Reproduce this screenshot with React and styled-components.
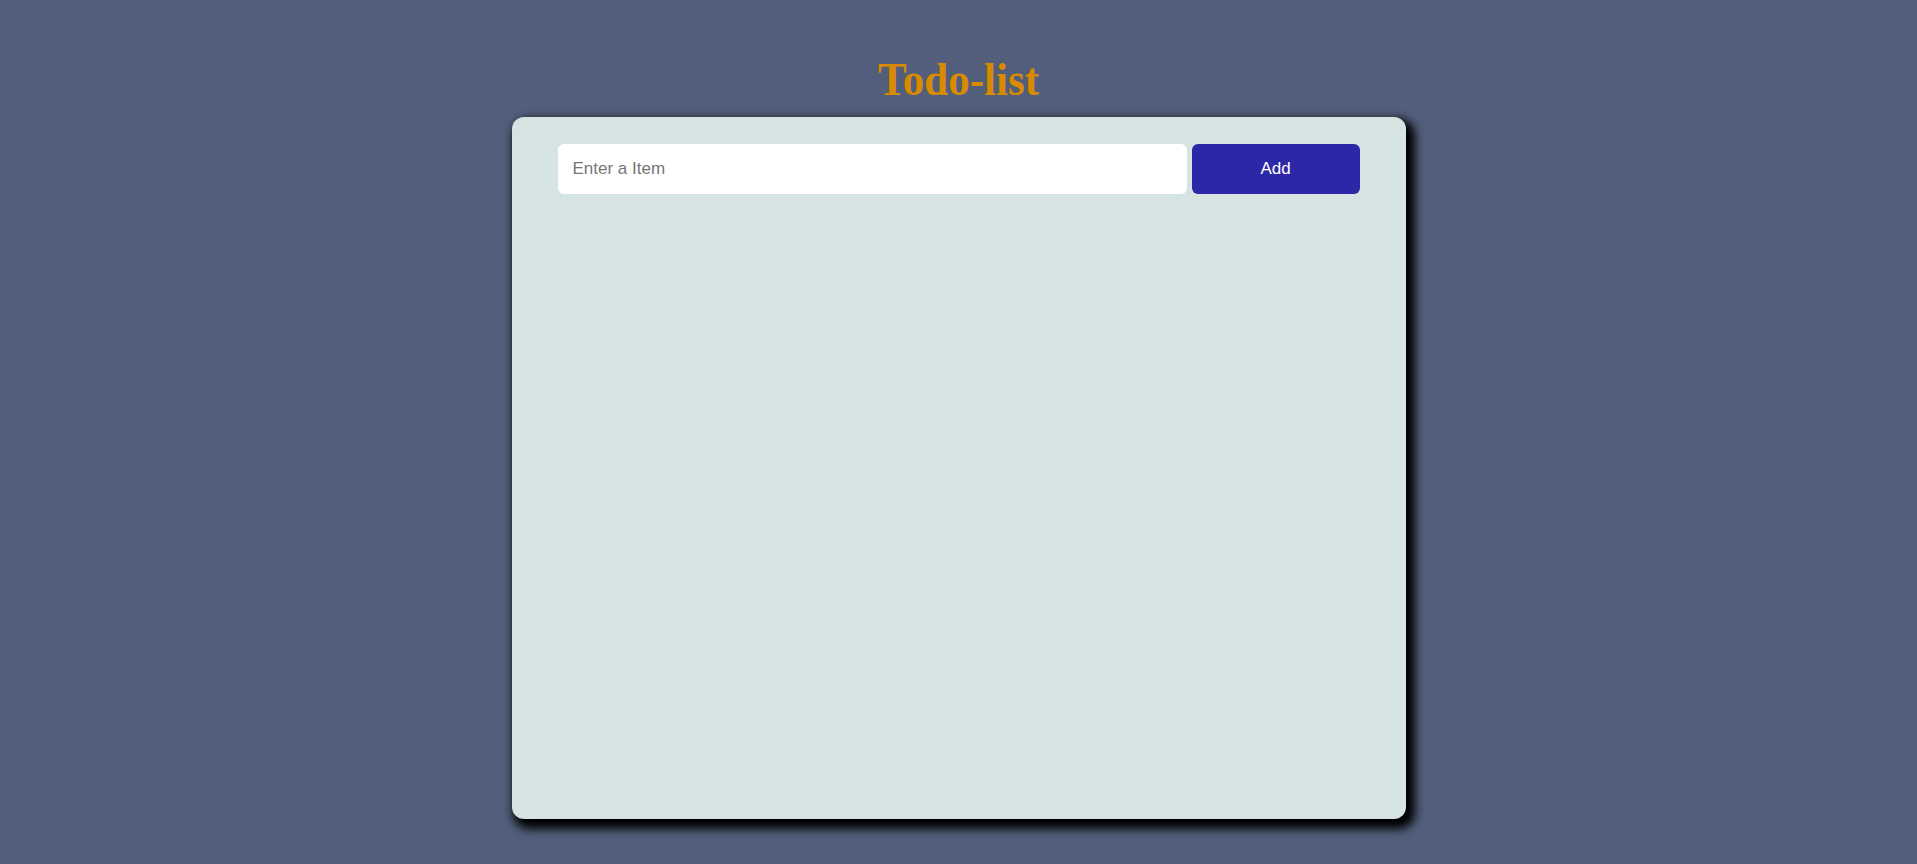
import React, { useState } from "react";
import styled, { createGlobalStyle } from "styled-components";

const GlobalStyle = createGlobalStyle`
  html, body {
    margin: 0;
    padding: 0;
    background: #525e7b;
  }
  body {
    font-family: "Liberation Serif", "Times New Roman", serif;
  }
`;

const Page = styled.div`
  min-height: 864px;
  display: flex;
  flex-direction: column;
  align-items: center;
  padding-top: 52px;
  box-sizing: border-box;
`;

const Title = styled.h1`
  margin: 0 0 7px;
  font-family: "Liberation Serif", "Times New Roman", serif;
  font-size: 43px;
  line-height: 58px;
  font-weight: bold;
  color: #d88b00;
  transform: scaleY(1.09);
  transform-origin: 50% 42px;
`;

const Card = styled.div`
  width: 894px;
  height: 702px;
  box-sizing: border-box;
  background: #d5e3e3;
  border-radius: 12px;
  box-shadow: 5px 6px 10px 4px #000;
  padding: 27px 46px;
`;

const Form = styled.form`
  display: flex;
  gap: 5px;
`;

const Input = styled.input`
  flex: 1;
  height: 50px;
  box-sizing: border-box;
  border: none;
  border-radius: 6px;
  background: #fff;
  padding: 0 15px;
  font-family: "Liberation Sans", Arial, sans-serif;
  font-size: 17px;
  color: #333;
  outline: none;

  &::placeholder {
    color: #767676;
  }
`;

const AddButton = styled.button`
  width: 168px;
  height: 50px;
  border: none;
  border-radius: 6px;
  background: #2c27a6;
  color: #fff;
  font-family: "Liberation Sans", Arial, sans-serif;
  font-size: 17px;
  cursor: pointer;
`;

const List = styled.ul`
  list-style: none;
  margin: 0;
  padding: 0;
`;

export default function App() {
  const [text, setText] = useState("");
  const [items, setItems] = useState([]);

  const add = (e) => {
    e.preventDefault();
    if (!text.trim()) return;
    setItems([...items, text]);
    setText("");
  };

  return (
    <>
      <GlobalStyle />
      <Page>
        <Title>Todo-list</Title>
        <Card>
          <Form onSubmit={add}>
            <Input
              placeholder="Enter a Item"
              value={text}
              onChange={(e) => setText(e.target.value)}
            />
            <AddButton type="submit">Add</AddButton>
          </Form>
          <List>
            {items.map((item, i) => (
              <li key={i}>{item}</li>
            ))}
          </List>
        </Card>
      </Page>
    </>
  );
}
